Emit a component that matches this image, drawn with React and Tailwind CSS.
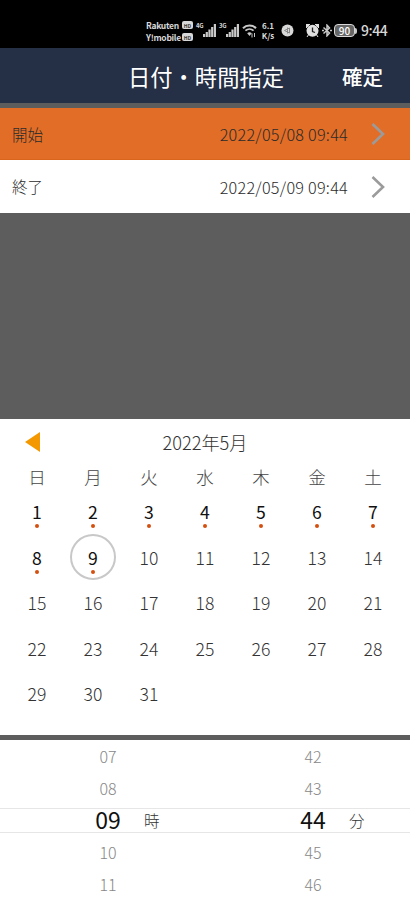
import { clsx } from "clsx";

const WEEKDAYS = ["日", "月", "火", "水", "木", "金", "土"];
const DAYS = Array.from({ length: 31 }, (_, i) => i + 1);
const SELECTED_DAY = 9;

const HOURS = ["07", "08", "09", "10", "11"];
const MINUTES = ["42", "43", "44", "45", "46"];

function Signal({ label }) {
  return (
    <div className="flex">
      <span className="w-[7px] -mt-px text-[6px] leading-[6px] font-bold tracking-tighter">{label}</span>
      <svg width="13" height="13" viewBox="0 0 13 13" fill="#c9c9c9">
        <rect x="0" y="10" width="2.2" height="3" />
        <rect x="2.7" y="8" width="2.2" height="5" />
        <rect x="5.4" y="5.5" width="2.2" height="7.5" />
        <rect x="8.1" y="3" width="2.2" height="10" />
        <rect x="10.8" y="0" width="2.2" height="13" />
      </svg>
    </div>
  );
}

function Carrier({ name }) {
  return (
    <div className="flex h-3 items-center justify-between">
      <span className="text-[8.5px] leading-3 font-bold tracking-[-0.3px]">{name}</span>
      <span className="flex h-2 w-[11px] items-center justify-center rounded-[2px] bg-[#d8d8d8] text-[5px] leading-none font-bold text-[#333]">
        HD
      </span>
    </div>
  );
}

function StatusBar() {
  return (
    <div className="flex h-12 items-start bg-black pt-[19px] pl-[146px] text-[#d8d8d8]">
      <div className="w-[47px]">
        <Carrier name="Rakuten" />
        <Carrier name="Y!mobile" />
      </div>
      <div className="mt-[5px] ml-[3px] flex gap-[3px]">
        <Signal label="4G" />
        <Signal label="3G" />
      </div>

      {/* wifi */}
      <svg className="mt-[5px] ml-[3px]" width="15" height="14" viewBox="0 0 15 14" fill="none" stroke="#c9c9c9">
        <path d="M1 4.2C4.5.6 10.5.6 14 4.2" strokeWidth="2" />
        <path d="M3.4 6.7c2.4-2.2 5.8-2.2 8.2 0" strokeWidth="1.7" />
        <path d="M5.2 9.2c1.4-1.2 3.2-1.2 4.6 0L7.5 12z" fill="#c9c9c9" stroke="none" />
        <path d="M10 9.5v4M12.5 9v4" strokeWidth="1" />
      </svg>

      <div className="mt-[2px] ml-[4px] w-[14px] text-center text-[8px] leading-[10px] font-bold">
        <div>6.1</div>
        <div>K/s</div>
      </div>

      <svg className="mt-[5px] ml-[6px]" width="13" height="13" viewBox="0 0 13 13">
        <circle cx="6.5" cy="6.5" r="6" fill="#d8d8d8" />
        <path d="M3.5 6.5L8.5 4v5zM6.5 3.5v6" fill="none" stroke="#888" />
      </svg>

      {/* alarm */}
      <svg className="mt-[5px] ml-[12px]" width="13" height="13" viewBox="0 0 13 13">
        <path d="M0 0h4L0 4zM13 0H9l4 4zM1 13l2-3M12 13l-2-3" fill="#e0e0e0" stroke="#e0e0e0" />
        <circle cx="6.5" cy="6.8" r="6" fill="#e0e0e0" />
        <path d="M6.5 3.5v4l2.5 1" fill="none" stroke="#222" strokeWidth="1.3" />
      </svg>

      {/* bluetooth */}
      <svg className="mt-[5px] ml-[3px]" width="10" height="13" viewBox="0 0 10 13" fill="none" stroke="#c9c9c9" strokeWidth="1.5">
        <path d="M1.5 3.5l6 5.5L5 11.8V1.2L7.5 4l-6 5.5" />
        <path d="M0 6.5h2M8 6.5h2" />
      </svg>

      <div className="mt-[5px] ml-[2px] flex items-center">
        <span className="flex h-[13px] w-[21px] items-center justify-center rounded-[4px] border border-[#d8d8d8] bg-[#666] text-[10px] leading-none font-medium text-white">
          90
        </span>
        <span className="h-[6px] w-[2px] rounded-r bg-[#c9c9c9]" />
      </div>

      <span className="mt-px ml-[4px] text-[14px] leading-5 font-medium tracking-[-0.5px]">9:44</span>
    </div>
  );
}

function DateRow({ label, value, active }) {
  return (
    <div
      className={clsx(
        "flex items-center pl-3 pr-[25px] text-[#2b2b2b]",
        active ? "h-[52px] border-b border-[#d9651c] bg-[#e16d27]" : "h-[53px] bg-white"
      )}
    >
      <span className={clsx("text-[15.5px] font-light", active && "pt-[2px]")}>{label}</span>
      <span className="ml-auto pt-px text-[16.2px] font-light tracking-[0.25px]">{value}</span>
      <svg className="ml-[23px]" width="14" height="22" viewBox="0 0 14 22" fill="none" stroke="#9b9b9b" strokeWidth="2.6">
        <path d="M1.5 1L12 11L1.5 21" />
      </svg>
    </div>
  );
}

function Day({ day }) {
  const past = day <= SELECTED_DAY;

  return (
    <div className="relative flex h-[45.5px] items-center justify-center">
      {day === SELECTED_DAY && (
        <span className="absolute top-[-1px] left-[5px] size-[46px] rounded-full border-2 border-[#c8c8c8]" />
      )}
      <span className={clsx("text-[17.6px]", past ? "text-[#111]" : "font-light text-[#333]")}>{day}</span>
      {past && <span className="absolute bottom-[7px] left-[26px] size-[4px] rounded-full bg-[#d4500f]" />}
    </div>
  );
}

function Wheel({ values, unit, className }) {
  return (
    <div className={clsx("relative w-[26px] text-center", className)}>
      {values.map((v, i) => (
        <div
          key={v}
          className={clsx(
            "flex h-8 items-center justify-center",
            i === 2 ? "pb-px text-[23px] text-[#111]" : "text-[16px] font-light text-[#888]"
          )}
        >
          {v}
        </div>
      ))}
      <span className="absolute top-16 left-[49px] text-[15.5px] leading-8 font-light text-[#333]">{unit}</span>
    </div>
  );
}

export default function App() {
  return (
    <div
      lang="ja"
      className="h-[900px] w-[410px] overflow-hidden bg-[#5d5d5d] font-['Noto_Sans_CJK_JP',sans-serif] leading-none"
    >
      <StatusBar />

      {/* Header */}
      <div className="relative flex h-[55px] items-center justify-center bg-[#252f45] pt-px pl-[2px] text-white">
        <h1 className="text-[22.3px]">日付・時間指定</h1>
        <button type="button" className="absolute right-[27px] text-[20.5px] font-medium">
          確定
        </button>
      </div>

      {/* Range */}
      <div className="mt-[5px]">
        <DateRow label="開始" value="2022/05/08 09:44" active />
        <DateRow label="終了" value="2022/05/09 09:44" />
      </div>

      {/* Calendar */}
      <div className="mt-[206px] h-[316px] bg-white px-[9px]">
        <div className="relative flex h-[47px] items-center justify-center text-[18.2px] font-light text-[#333]">
          <svg className="absolute top-[13px] left-[16px]" width="15" height="20" viewBox="0 0 15 20">
            <path d="M15 0v20L0 10z" fill="#f39800" />
          </svg>
          2022年5月
        </div>
        <div className="-mt-px grid grid-cols-7 text-center text-[17.5px] leading-6 font-light text-[#444]">
          {WEEKDAYS.map((w) => (
            <span key={w}>{w}</span>
          ))}
        </div>
        <div className="mt-[0.5px] grid grid-cols-7">
          {DAYS.map((day) => (
            <Day key={day} day={day} />
          ))}
        </div>
      </div>

      {/* Time picker */}
      <div className="relative mt-[5px] flex h-40 bg-white">
        <div className="absolute top-[68px] h-[25px] w-full border-y border-[#e6e6e6]" />
        <Wheel values={HOURS} unit="時" className="ml-[95px]" />
        <Wheel values={MINUTES} unit="分" className="ml-[179px]" />
      </div>
    </div>
  );
}
